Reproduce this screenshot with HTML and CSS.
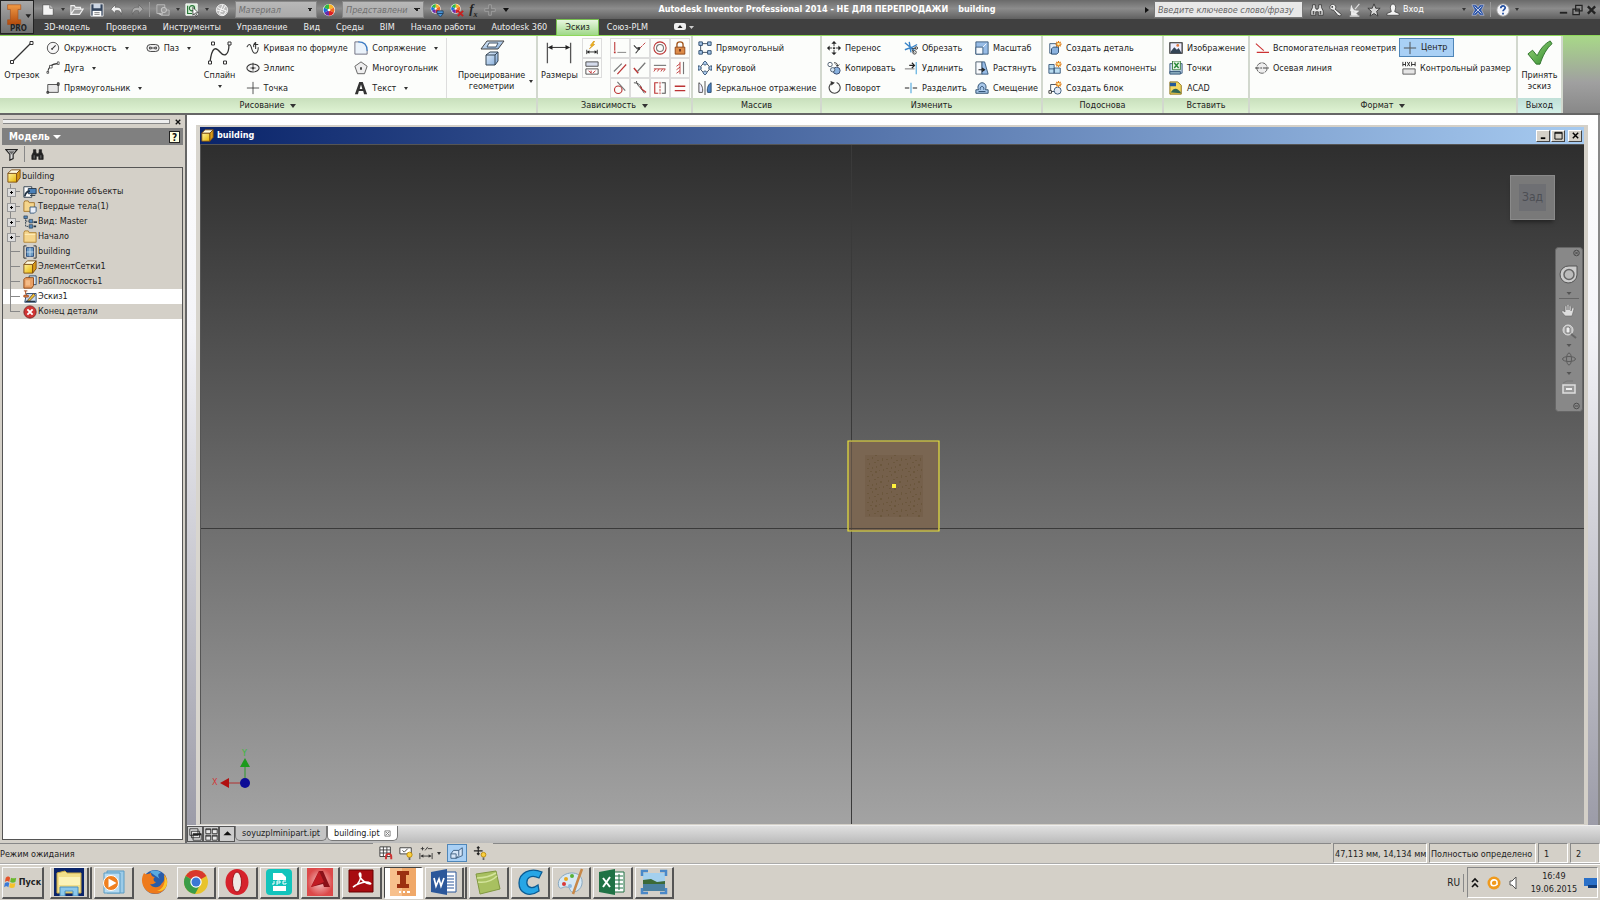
FILE: index.html
```html
<!DOCTYPE html>
<html lang="ru">
<head>
<meta charset="utf-8">
<title>Autodesk Inventor Professional 2014</title>
<link rel="stylesheet" href="styles.css">
</head>
<body>
<svg class="defs" aria-hidden="true">
<defs>
<linearGradient id="gy" x1="0" y1="0" x2="1" y2="1"><stop offset="0" stop-color="#fff3a0"/><stop offset="1" stop-color="#e8b400"/></linearGradient>
<linearGradient id="gb" x1="0" y1="0" x2="1" y2="1"><stop offset="0" stop-color="#e4f0fb"/><stop offset="1" stop-color="#7fa8d8"/></linearGradient>
<linearGradient id="go" x1="0" y1="0" x2="0" y2="1"><stop offset="0" stop-color="#f09a45"/><stop offset="1" stop-color="#b34a0c"/></linearGradient>
<linearGradient id="gg" x1="0" y1="0" x2="1" y2="1"><stop offset="0" stop-color="#9bd67c"/><stop offset="1" stop-color="#2f8a2c"/></linearGradient>
<radialGradient id="gm"><stop offset="0" stop-color="#f4c8c8"/><stop offset="1" stop-color="#dc4a4a"/></radialGradient>
<pattern id="noise" width="19" height="17" patternUnits="userSpaceOnUse"><path d="M1 2h2v1h-2zM6 0h1v2h-1zM11 3h2v1h-2zM16 1h1v3h-1zM3 6h1v2h-1zM8 5h2v1h-2zM14 7h2v2h-2zM1 11h2v1h-2zM6 10h1v2h-1zM10 9h1v2h-1zM17 12h1v2h-1zM4 14h2v1h-2zM9 14h2v2h-2zM13 13h1v1h-1z" fill="#5f4c2c" opacity=".45"/></pattern>
<g id="sun"><path d="M12 0v7M8.500 3.500h7M9.500 1l5 5M14.500 1l-5 5" stroke="#e07a10" stroke-width="1.300"/><circle cx="12" cy="3.500" r="1.500" fill="#fff0a0"/></g>
<symbol id="new" viewBox="0 0 16 16"><path d="M2 2h8l4 4v8H2z" fill="#f4f4f4" stroke="#444" stroke-width=".8"/><path d="M10 2v4h4" fill="#ccc" stroke="#777"/></symbol>
<symbol id="open" viewBox="0 0 16 16"><path d="M1 13V3h4l1 2h6v2M1 13l4-6h10l-4 6z" fill="#9a9a9a" stroke="#eee" stroke-width="1.300"/></symbol>
<symbol id="save" viewBox="0 0 16 16"><path d="M1 1h14v14H1z" fill="#33445c" stroke="#eee"/><path d="M4 1h8v5H4z" fill="#cdd6e4"/><path d="M3 9h10v6H3z" fill="#fff"/><path d="M5 11h6M5 13h6" stroke="#777"/></symbol>
<symbol id="undo" viewBox="0 0 16 16"><path d="M6 2L1 7l5 5V9c4-1 6 0 7 4 2-6-2-9-7-8z" fill="#eee" stroke="#444" stroke-width=".6"/></symbol>
<symbol id="redo" viewBox="0 0 16 16"><path d="M10 2l5 5-5 5V9c-4-1-6 0-7 4-2-6 2-9 7-8z" fill="#aaa" stroke="#555" stroke-width=".6"/></symbol>
<symbol id="upd" viewBox="0 0 16 16"><path d="M1 2h9v4H7v6H1zM8 8h7v6H7z" fill="#8a8a8a" stroke="#bbb"/><circle cx="9" cy="8" r="3" fill="#999" stroke="#ccc"/><path d="M3 12l4 2" fill="none" stroke="#ccc" stroke-width="1.500"/></symbol>
<symbol id="pick" viewBox="0 0 16 16"><path d="M1 1h13v13H1z" fill="#d8eed8" stroke="#fff"/><path d="M3 3v9h5" fill="none" stroke="#267336" stroke-width="1.300"/><circle cx="8" cy="6" r="3" fill="none" stroke="#267336" stroke-width="1.200"/><path d="M9 5l6 6-3 .3 2 3.500-1.500.7-2-3.500-1.500 2z" fill="#fff" stroke="#222" stroke-width=".8"/></symbol>
<symbol id="globe" viewBox="0 0 16 16"><circle cx="8" cy="8" r="6.500" fill="#bbb" stroke="#eee"/><path d="M3 5l4 2 2-5M7 7l-2 5 5 2 3-5-6-2M9 10l-7-2M12 3l-3 5" fill="none" stroke="#fff"/></symbol>
<symbol id="color" viewBox="0 0 16 16"><circle cx="8" cy="8" r="7" fill="#fff"/><path d="M8 8V1.500A6.500 6.500 0 0113.600 5z" fill="#f8b42a"/><path d="M8 8l5.600-3a6.500 6.500 0 010 6z" fill="#f06a20"/><path d="M8 8l5.600 3A6.500 6.500 0 018 14.500z" fill="#d22"/><path d="M8 8v6.500A6.500 6.500 0 012.400 11z" fill="#6a2ca8"/><path d="M8 8l-5.600 3a6.500 6.500 0 010-6z" fill="#1a70d8"/><path d="M8 8L2.400 5A6.500 6.500 0 018 1.500z" fill="#36b840"/><circle cx="8" cy="8" r="1.500" fill="#ffe"/></symbol>
<symbol id="color2" viewBox="0 0 16 16"><use href="#color" width="13" height="13"/><path d="M8 9h7v3H8zM8 12h7l-3 4z" fill="#4a94d8" stroke="#246"/></symbol>
<symbol id="color3" viewBox="0 0 16 16"><use href="#color" width="13" height="13"/><path d="M9 9l6 6M15 9l-6 6" stroke="#c52020" stroke-width="2.200"/></symbol>
<symbol id="plusg" viewBox="0 0 16 16"><path d="M6.500 2h3v4.500H14v3H9.500V14h-3V9.500H2v-3h4.500z" fill="#777" stroke="#aaa" stroke-width=".8"/></symbol>
<symbol id="bino" viewBox="0 0 16 16"><path d="M3 2h3v3l1 2h2l1-2V2h3v3l2 4v5H9.500v-4h-3v4H1V9l2-4z" fill="currentColor" stroke="#222" stroke-width=".8"/><path d="M3 9h2v4H3zM11 9h2v4h-2z" fill="#555"/></symbol>
<symbol id="key" viewBox="0 0 16 16"><path d="M1 5c0-3 4-5 6-2 1 1 1 3 0 4l7 6-1 2-3-1-5-6C3 8.500 1 7 1 5z" fill="#ececec" stroke="#333" stroke-width=".9"/><circle cx="3.700" cy="4.500" r="1" fill="#333"/></symbol>
<symbol id="dish" viewBox="0 0 16 16"><path d="M4 3c0 4 4 7 8 6l-3 3-6-3zM4 10v4h7l-4-4" fill="#eee" stroke="#eee"/><path d="M2 15h11M8 7l5-6" stroke="#ddd" stroke-width="1.300"/></symbol>
<symbol id="star" viewBox="0 0 16 16"><path d="M8 1l2 5h5l-4 3.500 1.500 5.500L8 12l-4.500 3L5 9.500 1 6h5z" fill="#d8d8d8" stroke="#333"/></symbol>
<symbol id="user" viewBox="0 0 16 16"><path d="M5 5c0-5 6-5 6 0 0 3-1 3-1 5l5 2v2H1v-2l5-2c0-2-1-2-1-5z" fill="#f4f4f4" stroke="#333" stroke-width=".8"/></symbol>
<symbol id="xch" viewBox="0 0 16 16"><path d="M1 2h5l2 3 2-3h5l-3 6 3 6h-5l-2-3-2 3H1l3-6z" fill="#2c56a8" stroke="#ccd" stroke-width=".7"/><path d="M4 4l8 8M12 4l-8 8" stroke="#dde" stroke-width="1"/></symbol>
<symbol id="help" viewBox="0 0 16 16"><circle cx="8" cy="8" r="7" fill="#f6f6fa" stroke="#aaa"/><path d="M5.500 6c0-3.500 5-3.500 5-.5 0 2-2.500 2-2.500 4M8 11v2" fill="none" stroke="#234fa0" stroke-width="2"/></symbol>
<symbol id="line" viewBox="0 0 26 26"><path d="M3 22L22 3" stroke="#333" stroke-width="1.200"/><path d="M1.500 20.500h3v3h-3zM21 1.500h3v3h-3z" fill="#fff" stroke="#333"/></symbol>
<symbol id="spline" viewBox="0 0 26 26"><path d="M3 22C5 6 9 7 13 12s9 4 9-8" fill="none" stroke="#333" stroke-width="1.300"/><path d="M1.500 21h3v3h-3zM21 2h3v3h-3zM4.500 2h3v3h-3zM16.500 21h3v3h-3z" fill="#fff" stroke="#333"/></symbol>
<symbol id="proj" viewBox="0 0 26 26"><path d="M8 1h17l-6 8H2z" fill="url(#gb)" stroke="#444"/><path d="M10 3h9l-2 4H8z" fill="#fff" stroke="#456"/><path d="M7 15l4-3h8v9l-3 4H7z" fill="url(#gb)" stroke="#345"/><path d="M7 15h9v10M16 15l3-3" fill="none" stroke="#345"/></symbol>
<symbol id="dims" viewBox="0 0 28 26"><path d="M1.500 2v22M26.500 2v22" stroke="#555" stroke-width="1.400"/><path d="M3 7h22" stroke="#222"/><path d="M2 7l5-2.500v5zM26 7l-5-2.500v5z" fill="#222"/></symbol>
<symbol id="check" viewBox="0 0 28 28"><path d="M1 15l5-4 5 6C14 10 19 4 25 1l2 3c-6 5-10 13-13 22h-4z" fill="url(#gg)" stroke="#2d702a"/></symbol>
<symbol id="circ" viewBox="0 0 16 16"><circle cx="8" cy="8" r="6.500" fill="#f6f6f6" stroke="#444"/><path d="M7 9l4-4" stroke="#333" stroke-width="1.200"/><path d="M6 8h2v2H6z" fill="#444"/></symbol>
<symbol id="arc" viewBox="0 0 16 16"><path d="M2 14C2 8 6 3 13 3" fill="none" stroke="#333" stroke-width="1.300"/><path d="M1 12h2v2H1zM4 5h3v3H4zM13 1h2v3h-2z" fill="#fff" stroke="#333" stroke-width=".8"/></symbol>
<symbol id="rect" viewBox="0 0 16 16"><path d="M2 4h12v9H2z" fill="#e8e8e8" stroke="#444"/><path d="M1 12h2v2H1zM13 2h2v3h-2z" fill="#777" stroke="#333"/></symbol>
<symbol id="slot" viewBox="0 0 16 16"><rect x="1" y="4" width="14" height="8" rx="4" fill="#eee" stroke="#333"/><path d="M4 7h2v2H4zM10 7h2v2h-2z" fill="#fff" stroke="#333"/><path d="M6 8h4" stroke="#333"/></symbol>
<symbol id="curve" viewBox="0 0 16 16"><path d="M1 7c2-4 4-4 5 0s2 7 4 7 4-2 4-7M9 7c-1-3 1-5 2-5M11 1v8M9 4h5" fill="none" stroke="#333" stroke-width="1.200"/></symbol>
<symbol id="ell" viewBox="0 0 16 16"><ellipse cx="8" cy="8" rx="7" ry="4.500" fill="#f4f4f4" stroke="#333" stroke-width="1.200"/><path d="M8 2v9M5 8h6" stroke="#333"/><path d="M7 7h2v2H7z" fill="#333"/></symbol>
<symbol id="point" viewBox="0 0 16 16"><path d="M8 1v14M1 8h14" stroke="#444"/><path d="M7 7h2v2H7z" fill="#777"/></symbol>
<symbol id="fillet" viewBox="0 0 16 16"><path d="M1 1h6c5 0 8 3 8 8v6H1z" fill="#eaf2fa"/><path d="M6 1H1v14h14v-5" fill="none" stroke="#667"/><path d="M5 1c6 0 10 3 10 10" fill="none" stroke="#3d7cc4" stroke-width="1.500"/></symbol>
<symbol id="poly" viewBox="0 0 16 16"><path d="M8 1l7 5-3 8.500H4L1 6z" fill="#eee" stroke="#555"/><path d="M7 7h2v3H7z" fill="#333"/></symbol>
<symbol id="txt" viewBox="0 0 16 16"><path d="M1 15L6 1h4l5 14h-3.500l-1-3.500h-5L4.500 15zM6.500 9h3L8 4z" fill="#333"/></symbol>
<symbol id="autod" viewBox="0 0 16 16"><path d="M10 0L6 5h2L5 9l6-5H9l2-4z" fill="#f8c020" stroke="#c88000" stroke-width=".6"/><path d="M2 10v5M14 10v5M3 12.500h10" stroke="#222"/><path d="M2 12.500l3-2v4zM14 12.500l-3-2v4z" fill="#222"/></symbol>
<symbol id="showc" viewBox="0 0 16 16"><path d="M1 1h14v5H1z" fill="#d5dcec" stroke="#444"/><path d="M1 9h14v6H1z" fill="#fff" stroke="#444"/><path d="M4 11l3 3M7 11v3M9 14l3-3" stroke="#b22"/></symbol>
<symbol id="c1" viewBox="0 0 16 16"><path d="M2 1v10" stroke="#b33" stroke-width="1.200"/><path d="M5 13h10" stroke="#777"/><path d="M1 12h2v2H1z" fill="#b33"/></symbol>
<symbol id="c2" viewBox="0 0 16 16"><path d="M1 5l4 4M8 8l-5 6" stroke="#333" stroke-width="1.200"/><path d="M8 8l6-6" stroke="#b33" stroke-dasharray="4 1"/><path d="M5 7h3v3H5z" fill="#333"/></symbol>
<symbol id="c3" viewBox="0 0 16 16"><circle cx="8" cy="8" r="7" fill="none" stroke="#b33" stroke-width="1.200"/><circle cx="8" cy="8" r="4" fill="none" stroke="#777" stroke-width="1.200"/></symbol>
<symbol id="c4" viewBox="0 0 16 16"><path d="M4.500 7V4c0-4 7-4 7 0v3" fill="none" stroke="#a55a22" stroke-width="1.600"/><path d="M2.500 7h11v8h-11z" fill="#dd8b48" stroke="#8a4010"/><path d="M8 9v3" stroke="#632" stroke-width="2"/></symbol>
<symbol id="c5" viewBox="0 0 16 16"><path d="M1 12L10 3" stroke="#777" stroke-width="1.300"/><path d="M5 15L15 4" stroke="#b33" stroke-width="1.300"/></symbol>
<symbol id="c6" viewBox="0 0 16 16"><path d="M1 8l5 6" stroke="#b33" stroke-width="1.600"/><path d="M5 12l9-10" stroke="#777" stroke-width="1.400"/></symbol>
<symbol id="c7" viewBox="0 0 16 16"><path d="M1 5h14" stroke="#777" stroke-width="1.300"/><path d="M1 9h13M3 9l-2 3M7 9l-2 3M11 9l-2 3M14 9l-2 3" stroke="#b33"/></symbol>
<symbol id="c8" viewBox="0 0 16 16"><path d="M12 1v14" stroke="#777" stroke-width="1.300"/><path d="M8 1v14M8 3L4 6M8 7l-4 3M8 11l-4 3" stroke="#b33"/></symbol>
<symbol id="c9" viewBox="0 0 16 16"><circle cx="6" cy="10" r="4.300" fill="none" stroke="#b33" stroke-width="1.300"/><path d="M5 1l9 10" stroke="#777" stroke-width="1.300"/></symbol>
<symbol id="c10" viewBox="0 0 16 16"><path d="M1 2c5 0 7 2 9 6M4 0c0 5 4 6 9 14" stroke="#444" fill="none"/><path d="M8 6c2 4 5 6 7 7" stroke="#b33" fill="none" stroke-width="1.300"/></symbol>
<symbol id="c11" viewBox="0 0 16 16"><path d="M6 2H2v12h4" fill="none" stroke="#b33" stroke-width="1.300"/><path d="M10 2h4v12h-4" fill="none" stroke="#555" stroke-width="1.200"/><path d="M8 1v14" stroke="#b33" stroke-dasharray="3 1"/></symbol>
<symbol id="c12" viewBox="0 0 16 16"><path d="M2 6h12M2 11h12" stroke="#b33" stroke-width="1.500"/></symbol>
<symbol id="prect" viewBox="0 0 16 16"><path d="M3 3h10M3 3v10M3 13h10" stroke="#345" fill="none"/><path d="M1 1h4v4H1zM11 1h4v4h-4zM1 11h4v4H1zM11 11h4v4h-4z" fill="#a9c8ea" stroke="#246"/></symbol>
<symbol id="pcirc" viewBox="0 0 16 16"><circle cx="8" cy="8" r="5" fill="none" stroke="#345"/><path d="M8 0l2.500 2.500L8 5 5.500 2.500zM8 11l2.500 2.500L8 16l-2.500-2.500zM1 5l3 3-3 3-1-3zM15 5l-3 3 3 3 1-3z" fill="#a9c8ea" stroke="#246" stroke-width=".9"/></symbol>
<symbol id="mirr" viewBox="0 0 16 16"><path d="M8 0v16" stroke="#444"/><path d="M1 2c4 2 5 8 4 11H1z" fill="#eef" stroke="#444"/><path d="M15 2c-4 2-5 8-4 11h4z" fill="#4f86c8" stroke="#246"/></symbol>
<symbol id="move" viewBox="0 0 16 16"><path d="M8 1v5M8 10v5M1 8h5M10 8h5" stroke="#222"/><path d="M8 0l3 3H5zM8 16l3-3H5zM0 8l3-3v6zM16 8l-3-3v6zM7 7h2v2H7z" fill="#222"/></symbol>
<symbol id="copy" viewBox="0 0 16 16"><circle cx="3.500" cy="4" r="2.500" fill="#fff" stroke="#456"/><circle cx="11" cy="11" r="4" fill="#8ab2df" stroke="#346"/><circle cx="6.500" cy="10" r="2.500" fill="#d4e4f4" stroke="#456"/><path d="M8 2c3 0 4 1 4 4M10 4l2 2 2-2" fill="none" stroke="#222"/></symbol>
<symbol id="rot" viewBox="0 0 16 16"><path d="M6 2a6.300 6.300 0 105-.2" fill="none" stroke="#444" stroke-width="1.300"/><path d="M4 0l5 2-4 3z" fill="#333"/></symbol>
<symbol id="trim" viewBox="0 0 16 16"><path d="M1 2l11 9M1 10l8-3M6 1l2 12M15 4L6 9" stroke="#3984c8" stroke-width="1.600"/><path d="M9 9l5-1M9 10l3 4" stroke="#333"/><circle cx="12" cy="13" r="2" fill="none" stroke="#333"/><circle cx="14" cy="8" r="1.500" fill="none" stroke="#333"/></symbol>
<symbol id="ext" viewBox="0 0 16 16"><path d="M14 1v14" stroke="#5fb0e0" stroke-width="1.400"/><path d="M1 9h11" stroke="#666"/><path d="M6 5h5M9 2l3 3-3 3" fill="none" stroke="#222" stroke-width="1.300"/></symbol>
<symbol id="split" viewBox="0 0 16 16"><path d="M1 8h5M10 8h5" stroke="#222" stroke-width="1.200"/><path d="M8 2v12" stroke="#5fb0e0" stroke-width="1.400"/></symbol>
<symbol id="scale" viewBox="0 0 16 16"><path d="M1 1h14v14H1z" fill="#98bce6" stroke="#357"/><path d="M1 7h8v8H1z" fill="#f4f8fd" stroke="#357"/><path d="M9 7l4-4" stroke="#fff"/></symbol>
<symbol id="stretch" viewBox="0 0 16 16"><path d="M1 1h7v14H1z" fill="#f8fafd" stroke="#456"/><path d="M8 1h3l4 14H8z" fill="#98bce6" stroke="#357"/><path d="M4 10h6M8 8l3 2-3 2" fill="none" stroke="#222" stroke-width="1.200"/></symbol>
<symbol id="offs" viewBox="0 0 16 16"><path d="M1 14h14v-4h-3c2-5-1-8-4-8S2 6 4 10H1z" fill="#a9c8ea" stroke="#246"/><path d="M4 12h8M6 10c-1-5 5-5 4 0" fill="none" stroke="#246"/></symbol>
<symbol id="mpart" viewBox="0 0 16 16"><path d="M2 3h8v11H2z" fill="#e4f0fb" stroke="#357"/><path d="M4 9l2-2h6v6l-2 2H4z" fill="#8ab2df" stroke="#246"/><use href="#sun"/></symbol>
<symbol id="mcomp" viewBox="0 0 16 16"><path d="M1 4h6v10H1zM7 8h7v6H7zM1 9h6" fill="#b9dcf0" stroke="#357"/><use href="#sun"/></symbol>
<symbol id="mblock" viewBox="0 0 16 16"><path d="M3 4h7M3 4v8h5" fill="none" stroke="#345"/><circle cx="11" cy="11" r="4" fill="#e0e8f4" stroke="#357"/><path d="M1 11h3v3H1z" fill="#fff" stroke="#333"/><use href="#sun"/></symbol>
<symbol id="img" viewBox="0 0 16 16"><path d="M1 2h14v12H1z" fill="#eef" stroke="#222" stroke-width="1.300"/><path d="M2 12l4-5 3 3 2-2 3 5v1H2z" fill="#345"/><circle cx="10" cy="5" r="1.600" fill="#e07a40"/></symbol>
<symbol id="xl" viewBox="0 0 16 16"><path d="M1 3h14v11H1z" fill="#c9dcf2" stroke="#357"/><path d="M4 0h9v10H4z" fill="#e7f4e7" stroke="#373"/><path d="M6 2l5 6M11 2L6 8" stroke="#2b8a3a" stroke-width="1.600"/><path d="M1 12h12v3H1z" fill="#8ab" stroke="#357"/></symbol>
<symbol id="acad" viewBox="0 0 16 16"><path d="M1 1h9l4 4v10H1z" fill="#f4d860" stroke="#886a10"/><path d="M1 2h7v4H1z" fill="#245a9a"/><path d="M2 13c4-6 8-5 12 1z" fill="#365"/></symbol>
<symbol id="constr" viewBox="0 0 16 16"><path d="M1 3l9 8M2 13h14" stroke="#c33" stroke-width="1.200"/></symbol>
<symbol id="cline" viewBox="0 0 16 16"><circle cx="8" cy="8" r="6" fill="#eee" stroke="#555" stroke-dasharray="6 1"/><path d="M0 8h16" stroke="#333" stroke-dasharray="5 1 2 1"/></symbol>
<symbol id="dd" viewBox="0 0 16 16"><path d="M1 9h14v6H1z" fill="#e5e5e5" stroke="#555"/><path d="M1 1v5M4 1v5M1 4h3M6 1l3 5M9 1L6 6M11 1v5M15 1v5M11 4h4" stroke="#222" fill="none"/></symbol>
<symbol id="cube" viewBox="0 0 16 16"><path d="M1 5h10v10H1z" fill="url(#gy)" stroke="#7a4a10"/><path d="M1 5l4-4h10l-4 4z" fill="#fffbe0" stroke="#7a4a10"/><path d="M11 5v10l4-5V1z" fill="#d99a18" stroke="#7a4a10"/></symbol>
<symbol id="t1" viewBox="0 0 16 16"><path d="M1 2h9v12H1z" fill="#fff" stroke="#234"/><path d="M6 4h9v6H6z" fill="#4a80b8" stroke="#234"/><path d="M2 13c1-5 3-6 6-6" fill="none" stroke="#234" stroke-width="2"/><path d="M8 12h6" stroke="#234"/></symbol>
<symbol id="t2" viewBox="0 0 16 16"><path d="M1 3l1-2h4l1 2h6v10H1z" fill="#f5d58c" stroke="#a07028"/><path d="M8 8h7v5l-2 2H8z" fill="#e9eef8" stroke="#357"/></symbol>
<symbol id="t3" viewBox="0 0 16 16"><path d="M3 2v11h5M3 7h5" fill="none" stroke="#234" stroke-dasharray="2 1"/><path d="M1 1h4v3H1zM7 5h4v4H7zM7 11h4v4H7z" fill="#58b" stroke="#234" stroke-width=".7"/><path d="M12 8h4M12 13h3" stroke="#234" stroke-width="2"/></symbol>
<symbol id="t4" viewBox="0 0 16 16"><path d="M1 3l1-2h4l1 2h8v11H1z" fill="#f5d58c" stroke="#b08030"/><path d="M2 5h12" stroke="#fff0c0"/></symbol>
<symbol id="t5" viewBox="0 0 16 16"><path d="M4 1H1v14h3M12 1h3v14h-3" fill="none" stroke="#222"/><path d="M4 3h8v10H4z" fill="#6c9cc4" stroke="#247"/><path d="M8 3v10M4 8h8" stroke="#cde"/></symbol>
<symbol id="t7" viewBox="0 0 16 16"><path d="M7 1h8v10H7z" fill="#d6e4f4" stroke="#246"/><path d="M1 5l2-2h9v9l-2 3H1z" fill="#e8a066" stroke="#8a4010"/><path d="M3 6h5v6H3z" fill="#f4bc88"/></symbol>
<symbol id="t8" viewBox="0 0 16 16"><path d="M4 4h11v10H2z" fill="#c9dcf2" stroke="#246"/><path d="M1 1h4M3 1v4M1 6h5v2H1z" stroke="#a44010" fill="#f0a060"/><path d="M5 12l7-8 2 2-7 7z" fill="#f2c92c" stroke="#644"/><path d="M3 13h11" stroke="#234" stroke-width="1.500"/></symbol>
<symbol id="t9" viewBox="0 0 16 16"><circle cx="8" cy="8" r="7" fill="#d03434" stroke="#7a2424"/><path d="M5 5l6 6M11 5l-6 6" stroke="#fff" stroke-width="2.200"/></symbol>
<symbol id="filter" viewBox="0 0 16 16"><path d="M1 2h14L10 8v5l-4 2V8z" fill="#ddd" stroke="#222" stroke-width="1.400"/><path d="M4 4h8L8 8z" fill="#666"/></symbol>
<symbol id="grid" viewBox="0 0 16 16"><path d="M1 1h12v11H1zM1 4.500h12M1 8h12M5 1v11M9 1v11" fill="#fff" stroke="#333"/><path d="M8 15v-3c0-4 6-4 6 0v3" fill="none" stroke="#c33" stroke-width="2.200"/></symbol>
<symbol id="cshow" viewBox="0 0 16 16"><path d="M1 2h13v7H1z" fill="#fff" stroke="#333"/><path d="M4 5l2 2 4-4" fill="none" stroke="#333"/><circle cx="12" cy="10" r="3" fill="#f9cf40" stroke="#b80"/><path d="M12 13v3" stroke="#666" stroke-width="2"/></symbol>
<symbol id="tol" viewBox="0 0 16 16"><path d="M2 3h4M4 1v4M7 5l3-4M10 3h5M1 8v7M15 8v7M2 11.500h12" stroke="#333"/><path d="M2 11.500l3-2v4zM14 11.500l-3-2v4z" fill="#333"/></symbol>
<symbol id="slice" viewBox="0 0 16 16"><path d="M1 9l3-4h6v6l-3 3H1zM10 5l4-3v9l-7 3" fill="#d6e6f8" stroke="#357"/><path d="M1 9h6v5" fill="none" stroke="#357"/></symbol>
<symbol id="dof" viewBox="0 0 16 16"><path d="M6 1v9M1 5.500h10M4.500 2.500L6 1l1.500 1.500M4.500 8.500L6 10l1.500-1.500" fill="none" stroke="#222" stroke-width="1.300"/><circle cx="12" cy="10" r="2.700" fill="#f9cf40" stroke="#b80"/><path d="M12 13v3" stroke="#666" stroke-width="2"/></symbol>
<symbol id="casc" viewBox="0 0 16 16"><path d="M1 1h10v8H1zM3 4h10v8H3zM5 7h10v8H5z" fill="#e8e8e8" stroke="#222"/><path d="M5 8h10" stroke="#222" stroke-width="2"/></symbol>
<symbol id="tile" viewBox="0 0 16 16"><path d="M1 1h6v6H1zM9 1h6v6H9zM1 9h6v6H1zM9 9h6v6H9z" fill="#e8e8e8" stroke="#222"/><path d="M1 2h6M9 2h6M1 10h6M9 10h6" stroke="#222"/></symbol>
</defs>
</svg>

<div class="app">
<header class="top">
  <button class="appbtn" aria-label="Меню приложения"><svg viewBox="0 0 34 34"><path d="M7 4h14v5h-3v11h3v5H7v-5h3V9H7z" fill="url(#go)" stroke="#a84a10" stroke-width=".6"/><path d="M26 14h6l-3 4z" fill="#222"/></svg><span>PRO</span></button>
  <div class="bars">
    <div class="title">
      <div class="qat">
        <button aria-label="Создать"><svg><use href="#new"/></svg></button><i class="dn"></i>
        <button aria-label="Открыть"><svg><use href="#open"/></svg></button>
        <button aria-label="Сохранить"><svg><use href="#save"/></svg></button>
        <button aria-label="Отменить"><svg><use href="#undo"/></svg></button>
        <button aria-label="Повторить"><svg><use href="#redo"/></svg></button><i class="bar"></i>
        <button aria-label="Обновить"><svg><use href="#upd"/></svg></button><i class="dn"></i>
        <button aria-label="Выбор"><svg><use href="#pick"/></svg></button><i class="dn"></i>
        <button aria-label="Материалы"><svg><use href="#globe"/></svg></button>
        <select class="combo" aria-label="Материал"><option>Материал</option></select>
        <button aria-label="Цвета"><svg><use href="#color"/></svg></button>
        <select class="combo" aria-label="Представление"><option>Представлени</option></select>
        <button aria-label="Настроить"><svg><use href="#color2"/></svg></button>
        <button aria-label="Очистить"><svg><use href="#color3"/></svg></button>
        <button class="fx" aria-label="Параметры">f<sub>x</sub></button>
        <button aria-label="Добавить"><svg><use href="#plusg"/></svg></button><i class="dn wide"></i>
      </div>
      <h1><span>Autodesk Inventor Professional 2014 - НЕ ДЛЯ ПЕРЕПРОДАЖИ</span><span>building</span></h1>
      <div class="info">
        <i class="rt"></i>
        <input class="search" type="text" placeholder="Введите ключевое слово/фразу" aria-label="Поиск">
        <button class="w" aria-label="Найти"><svg><use href="#bino"/></svg></button>
        <button aria-label="Подписка"><svg><use href="#key"/></svg></button>
        <button aria-label="Связь"><svg><use href="#dish"/></svg></button>
        <button aria-label="Избранное"><svg><use href="#star"/></svg></button>
        <button class="login"><svg><use href="#user"/></svg>Вход</button>
        <i class="dn"></i>
        <button aria-label="Exchange"><svg><use href="#xch"/></svg></button><i class="bar"></i>
        <button aria-label="Справка"><svg><use href="#help"/></svg></button><i class="dn"></i>
        <div class="wc"><button aria-label="Свернуть"><svg viewBox="0 0 12 12"><path d="M2 9h8" stroke="#222" stroke-width="2"/></svg></button><button aria-label="Восстановить"><svg viewBox="0 0 12 12"><path d="M4 1h7v6H4zM1 5h7v6H1z" fill="#888" stroke="#222" stroke-width="1.300"/></svg></button><button aria-label="Закрыть"><svg viewBox="0 0 12 12"><path d="M2 2l8 8M10 2l-8 8" stroke="#222" stroke-width="2.500"/></svg></button></div>
      </div>
    </div>
    <nav class="menu">
      <a href="#">3D-модель</a><a href="#">Проверка</a><a href="#">Инструменты</a><a href="#">Управление</a><a href="#">Вид</a><a href="#">Среды</a><a href="#">BIM</a><a href="#">Начало работы</a><a href="#">Autodesk 360</a><a href="#" class="on">Эскиз</a><a href="#">Союз-PLM</a>
      <button class="mini" aria-label="Свернуть ленту"><svg viewBox="0 0 20 10"><rect y="1" width="12" height="7" rx="2" fill="#eee"/><path d="M6 3l2.500 3h-5z" fill="#222"/><path d="M15 4h5l-2.500 3z" fill="#ccc"/></svg></button>
    </nav>
  </div>
</header>

<section class="ribbon">
  <div class="panel draw">
    <div class="body">
      <button class="big"><svg><use href="#line"/></svg>Отрезок</button>
      <div class="col"><button><svg><use href="#circ"/></svg>Окружность<i class="dn"></i></button><button><svg><use href="#arc"/></svg>Дуга<i class="dn"></i></button><button><svg><use href="#rect"/></svg>Прямоугольник<i class="dn"></i></button></div>
      <div class="col"><button><svg><use href="#slot"/></svg>Паз<i class="dn"></i></button></div>
      <button class="big"><svg><use href="#spline"/></svg>Сплайн<i class="dn"></i></button>
      <div class="col"><button><svg><use href="#curve"/></svg>Кривая по формуле</button><button><svg><use href="#ell"/></svg>Эллипс</button><button><svg><use href="#point"/></svg>Точка</button></div>
      <div class="col"><button><svg><use href="#fillet"/></svg>Сопряжение<i class="dn"></i></button><button><svg><use href="#poly"/></svg>Многоугольник</button><button><svg><use href="#txt"/></svg>Текст<i class="dn"></i></button></div>
      <button class="big proj"><svg><use href="#proj"/></svg><span>Проецирование<br>геометрии</span><i class="dn"></i></button>
    </div>
    <footer>Рисование<i class="dn"></i></footer>
  </div>
  <div class="panel cons">
    <div class="body">
      <button class="big"><svg><use href="#dims"/></svg>Размеры</button>
      <div class="cells one"><button aria-label="Автоматические размеры"><svg><use href="#autod"/></svg></button><button aria-label="Показать"><svg><use href="#showc"/></svg></button></div>
      <div class="cells"><button aria-label="Совпадение"><svg><use href="#c1"/></svg></button><button aria-label="Коллинеарность"><svg><use href="#c2"/></svg></button><button aria-label="Концентричность"><svg><use href="#c3"/></svg></button><button aria-label="Фиксация"><svg><use href="#c4"/></svg></button><button aria-label="Параллельность"><svg><use href="#c5"/></svg></button><button aria-label="Перпендикулярность"><svg><use href="#c6"/></svg></button><button aria-label="Горизонтальность"><svg><use href="#c7"/></svg></button><button aria-label="Вертикальность"><svg><use href="#c8"/></svg></button><button aria-label="Касательность"><svg><use href="#c9"/></svg></button><button aria-label="Сглаживание"><svg><use href="#c10"/></svg></button><button aria-label="Симметричность"><svg><use href="#c11"/></svg></button><button aria-label="Равенство"><svg><use href="#c12"/></svg></button></div>
    </div>
    <footer>Зависимость<i class="dn"></i></footer>
  </div>
  <div class="panel patt">
    <div class="body"><div class="col"><button><svg><use href="#prect"/></svg>Прямоугольный</button><button><svg><use href="#pcirc"/></svg>Круговой</button><button><svg><use href="#mirr"/></svg>Зеркальное отражение</button></div></div>
    <footer>Массив</footer>
  </div>
  <div class="panel mod">
    <div class="body">
      <div class="col"><button><svg><use href="#move"/></svg>Перенос</button><button><svg><use href="#copy"/></svg>Копировать</button><button><svg><use href="#rot"/></svg>Поворот</button></div>
      <div class="col"><button><svg><use href="#trim"/></svg>Обрезать</button><button><svg><use href="#ext"/></svg>Удлинить</button><button><svg><use href="#split"/></svg>Разделить</button></div>
      <div class="col"><button><svg><use href="#scale"/></svg>Масштаб</button><button><svg><use href="#stretch"/></svg>Растянуть</button><button><svg><use href="#offs"/></svg>Смещение</button></div>
    </div>
    <footer>Изменить</footer>
  </div>
  <div class="panel lay">
    <div class="body"><div class="col"><button><svg><use href="#mpart"/></svg>Создать деталь</button><button><svg><use href="#mcomp"/></svg>Создать компоненты</button><button><svg><use href="#mblock"/></svg>Создать блок</button></div></div>
    <footer>Подоснова</footer>
  </div>
  <div class="panel ins">
    <div class="body"><div class="col"><button><svg><use href="#img"/></svg>Изображение</button><button><svg><use href="#xl"/></svg>Точки</button><button><svg><use href="#acad"/></svg>ACAD</button></div></div>
    <footer>Вставить</footer>
  </div>
  <div class="panel fmt">
    <div class="body">
      <div class="col"><button><svg><use href="#constr"/></svg>Вспомогательная геометрия</button><button><svg><use href="#cline"/></svg>Осевая линия</button></div>
      <div class="col"><button class="sel"><svg><use href="#point"/></svg>Центр</button><button><svg><use href="#dd"/></svg>Контрольный размер</button></div>
    </div>
    <footer>Формат<i class="dn"></i></footer>
  </div>
  <div class="panel exit">
    <div class="body"><button class="big"><svg><use href="#check"/></svg><span>Принять<br>эскиз</span></button></div>
    <footer>Выход</footer>
  </div>
</section>

<main class="work">
  <aside class="side">
    <div class="grip"><i></i><button aria-label="Закрыть панель"><svg viewBox="0 0 8 8"><path d="M1 1l6 6M7 1L1 7" stroke="#111" stroke-width="1.800"/></svg></button></div>
    <div class="shead"><span>Модель</span><i class="dn"></i><button aria-label="Справка">?</button></div>
    <div class="stools"><button aria-label="Фильтр"><svg><use href="#filter"/></svg></button><i></i><button aria-label="Найти"><svg><use href="#bino"/></svg></button></div>
    <div class="tree">
      <div class="root"><svg><use href="#cube"/></svg>building</div>
      <ul>
        <li class="ex"><svg><use href="#t1"/></svg>Сторонние объекты</li>
        <li class="ex"><svg><use href="#t2"/></svg>Твердые тела(1)</li>
        <li class="ex"><svg><use href="#t3"/></svg>Вид: Master</li>
        <li class="ex"><svg><use href="#t4"/></svg>Начало</li>
        <li><svg><use href="#t5"/></svg>building</li>
        <li><svg><use href="#cube"/></svg>ЭлементСетки1</li>
        <li><svg><use href="#t7"/></svg>РабПлоскость1</li>
        <li class="cur"><svg><use href="#t8"/></svg>Эскиз1</li>
        <li><svg><use href="#t9"/></svg>Конец детали</li>
      </ul>
    </div>
  </aside>
  <section class="mdi">
    <div class="desk">
      <article class="win">
        <header><svg><use href="#cube"/></svg><h2>building</h2>
          <button aria-label="Свернуть"><svg viewBox="0 0 10 10"><path d="M2 8h5" stroke="#000" stroke-width="2"/></svg></button><button aria-label="Развернуть"><svg viewBox="0 0 10 10"><path d="M1 1.500h8v7.500H1zM1 2.500h8" fill="none" stroke="#000"/></svg></button><button class="x" aria-label="Закрыть"><svg viewBox="0 0 10 10"><path d="M2 2l6 6M8 2L2 8" stroke="#000" stroke-width="1.600"/></svg></button></header>
        <div class="canvas">
          <i class="ax v"></i><i class="ax h"></i>
          <svg class="sketch" viewBox="0 0 93 92"><path d="M1 1h91v90H1z" fill="#7b6651" fill-opacity=".94" stroke="#e8e23c" stroke-width="1.200"/><path d="M4.500 2v88" stroke="#5f5246"/><path d="M2 88.500h89" stroke="#4a413a"/><path d="M18 15h58v62H18z" fill="#75604b"/><path d="M18 15h58v62H18z" fill="url(#noise)"/><path d="M45 44h4v4h-4z" fill="#fff23c"/></svg>
          <div class="vcube"><span>Зад</span></div>
          <svg class="nav" viewBox="0 0 28 165"><rect x=".5" y=".5" width="27" height="164" rx="3" fill="#888" stroke="#666"/><g fill="none" stroke="#4c4c4c"><circle cx="21.500" cy="6" r="2.800"/><path d="M20 4.500l3 3M23 4.500l-3 3"/><circle cx="21.500" cy="159" r="2.800"/><path d="M20 159h3"/><path d="M4 51.500h20" stroke="#666"/></g><path d="M14 19h8v9a8.500 8.500 0 11-8-9z" fill="#ccc" stroke="#555"/><circle cx="14" cy="27.500" r="5" fill="#bbb" stroke="#666" stroke-width="1.500"/><path d="M11.500 45h5l-2.500 3zM11.500 97h5l-2.500 3zM11.500 125h5l-2.500 3z" fill="#555"/><path d="M10 69c-2-3-4-4-3-5s3 1 3 1v-6c1-1 2 0 2 1v3-5c1-1 2 0 2 1v4-4c1-1 2 0 2 1v4l1-3c1-1 2 0 2 1l-2 7z" fill="#ddd" stroke="#666" stroke-width=".6"/><circle cx="13" cy="83" r="5" fill="#bbb" stroke="#ddd"/><path d="M11 80h3l1 1v5h-4z" fill="#eee" stroke="#555" stroke-width=".7"/><path d="M16 87l5 4" stroke="#666" stroke-width="2"/><g fill="none" stroke="#5c5c5c"><ellipse cx="14" cy="112" rx="6.500" ry="2.500"/><ellipse cx="14" cy="112" rx="2.500" ry="6"/></g><path d="M8 138h12v8H8z" fill="#999" stroke="#ddd" stroke-width="1.500"/><path d="M11 141h6v2h-6z" fill="#eee"/><path d="M8 136l4-2h6" stroke="#777" fill="none"/></svg>
          <svg class="triad" viewBox="0 0 42 42"><path d="M33 31V9" stroke="#2a9a2a"/><path d="M33 6l5 9h-10z" fill="#1c9a1c"/><path d="M33 31H10" stroke="#b03030"/><path d="M8 31l9-5v10z" fill="#b01010"/><circle cx="33" cy="31" r="5" fill="#0c0c96"/></svg>
          <span class="lx">X</span><span class="ly">Y</span>
        </div>
      </article>
    </div>
    <div class="tabs">
      <button class="sq" aria-label="Каскад"><svg><use href="#casc"/></svg></button><button class="sq" aria-label="Мозаика"><svg><use href="#tile"/></svg></button><button class="sq" aria-label="Вверх"><svg viewBox="0 0 16 16"><path d="M8 4l5 5H3z" fill="#111"/></svg></button>
      <button class="tab">soyuzplminipart.ipt</button><button class="tab on">building.ipt <svg viewBox="0 0 8 8"><path d="M1 1h6v6H1zM2 2l4 4M6 2L2 6" fill="none" stroke="#777"/></svg></button>
    </div>
  </section>
</main>

<div class="status">
  <span class="msg">Режим ожидания</span>
  <div class="stb"><button aria-label="Привязка к сетке"><svg><use href="#grid"/></svg></button><button aria-label="Зависимости"><svg><use href="#cshow"/></svg></button><button aria-label="Допуски"><svg><use href="#tol"/></svg></button><i class="dn"></i><button class="sel" aria-label="Разрез"><svg><use href="#slice"/></svg></button><button aria-label="Степени свободы"><svg><use href="#dof"/></svg></button></div>
  <span class="fill"></span>
  <span class="c a">47,113 мм, 14,134 мм</span><span class="c b">Полностью определено</span><span class="c n">1</span><span class="c n">2</span>
</div>

<footer class="task">
  <button class="start"><svg viewBox="0 0 16 16"><path d="M2 3c2-2 4-1 5 0L6 8C5 7 3 6 1 8z" fill="#e5532a"/><path d="M8 3c2 1 4 1 6 0l-1 5c-2 1-4 1-6 0z" fill="#6ab82c"/><path d="M1 9c2-1 4-1 5 0l-1 5c-1-1-3-2-5 0z" fill="#3a7ad8"/><path d="M7 9c2 1 4 1 6 0l-1 5c-2 1-4 1-6 0z" fill="#f6c22a"/></svg>Пуск</button>
  <div class="apps">
    <button class="multi" aria-label="Проводник"><svg viewBox="0 0 30 28"><path d="M0 0h30v28H0z" fill="#0a246a"/><path d="M3 5l8-2 2 2h14v20H3z" fill="#f2df8a" stroke="#c8a848"/><path d="M5 9h21v8H5z" fill="#fcf3b8"/><path d="M6 28v-9h18v9h-5v-5h-8v5z" fill="#8cc8ea" stroke="#4a90c0"/></svg></button>
    <button aria-label="Проигрыватель"><svg viewBox="0 0 30 28"><path d="M9 3h17v22H9z" fill="#9ccbe8" stroke="#5a9cc4"/><path d="M6 5h16v20H6z" fill="#b8dcf2" stroke="#5a9cc4"/><circle cx="13" cy="15" r="7.500" fill="#f08020" stroke="#fff"/><path d="M10.500 10.500l8 4.500-8 4.500z" fill="#fff"/></svg></button>
    <button class="flat" aria-label="Firefox"><svg viewBox="0 0 30 28"><circle cx="15" cy="14" r="12" fill="#2a5ca8"/><path d="M10 4c3-2 8-2 11 1-4 0-3 4-1 6z" fill="#5aaae0"/><path d="M4 5c-3 5-3 12 2 17 7 7 19 4 21-6 1-4-1-8-3-10 1 4 0 8-2 9-2 5-9 6-12 1 3 1 5-1 6-2-3 0-3-4-1-5-3 0-4-2-4-4-3 1-5 2-7 0z" fill="#ee7a1c"/><path d="M24 7c2 6 0 14-7 16 10 1 13-9 7-16z" fill="#fbc52c"/></svg></button>
    <button aria-label="Chrome"><svg viewBox="0 0 30 28"><circle cx="15" cy="14" r="12" fill="#e8c32c"/><path d="M15 14L4.600 8A12 12 0 0125.400 8z" fill="#d8382c"/><path d="M4.600 8A12 12 0 0014 26l5-9-4-3z" fill="#3a9c48"/><circle cx="15" cy="14" r="5.700" fill="#fff"/><circle cx="15" cy="14" r="4.500" fill="#3c78d4"/></svg></button>
    <button aria-label="Opera"><svg viewBox="0 0 30 28"><ellipse cx="15" cy="14" rx="11.500" ry="13" fill="#d6222c"/><ellipse cx="15" cy="14" rx="4.500" ry="10" fill="#eee8e4" stroke="#a0141c"/></svg></button>
    <button aria-label="JPG"><svg viewBox="0 0 30 28"><rect x="2" y="1" width="26" height="26" rx="4" fill="#12c4bc"/><path d="M9 5h9l4 4v14H9z" fill="#fff"/><path d="M7 12h17v6H7z" fill="#12c4bc"/><path d="M10 13v3h-2M13 17v-4h3v2h-3M22 13h-3v3h3v-1" stroke="#fff" fill="none"/></svg></button>
    <button aria-label="AutoCAD"><svg viewBox="0 0 30 28"><path d="M2 0h26v28H2z" fill="url(#gm)"/><path d="M14 3h4l7 16h-6l-1-3-12 3z" fill="#8a1018"/><path d="M14 3L6 19l8-3 5-2z" fill="#c01c24"/></svg></button>
    <button aria-label="Acrobat"><svg viewBox="0 0 30 28"><path d="M3 2h24v22H3z" fill="#a80c10" stroke="#600"/><path d="M7 19c8-3 9-14 7-14s0 9 10 11c2 0 0-2-4-2s-11 3-13 5z" fill="none" stroke="#fff" stroke-width="1.500"/></svg></button>
    <button class="act" aria-label="Inventor"><svg viewBox="0 0 30 28"><path d="M2 0h26v28H2z" fill="#f0a868"/><path d="M2 0h12v28H2z" fill="#f7c08c"/><path d="M9 3h12v4h-3v9h3v4H9v-4h3V7H9z" fill="#9c3010"/><path d="M11 24h2M15 24h2M19 24h3" stroke="#fff" stroke-width="2"/></svg></button>
    <button class="multi" aria-label="Word"><svg viewBox="0 0 30 28"><path d="M14 4h13v20H14z" fill="#fff" stroke="#2b579a"/><path d="M18 8h7M18 11h7M18 14h7M18 17h7M18 20h7" stroke="#2b579a"/><path d="M2 4l16-3v26L2 24z" fill="#2b579a"/><path d="M5 10l2 8 3-7 2 7 3-8" fill="none" stroke="#fff" stroke-width="1.700"/></svg></button>
    <button aria-label="Фото"><svg viewBox="0 0 30 28"><path d="M3 6l20-3 4 18-20 5z" fill="#a8c060" stroke="#809840"/><path d="M4 10c8 0 14-2 19-5M5 14c8 1 14-1 19-6" stroke="#d4e49c" stroke-width="1.500" fill="none"/></svg></button>
    <button aria-label="C"><svg viewBox="0 0 30 28"><path d="M27 4l-3 6c-8-4-13 0-12 6 1 4 6 5 11 1l1 6C14 30 4 25 4 15S15-1 27 4z" fill="#27a6e6" stroke="#0b5c94" stroke-width="1.300"/></svg></button>
    <button aria-label="Paint"><svg viewBox="0 0 30 28"><path d="M3 19C-1 9 14 1 23 7c6 5 3 16-5 17-5 1-3-5-7-5-4-1-6 3-8 0z" fill="#d6e8f4" stroke="#88a8c0"/><circle cx="8" cy="16" r="2" fill="#d83838"/><circle cx="10" cy="11" r="2" fill="#e8a820"/><circle cx="16" cy="8" r="2" fill="#58b038"/><circle cx="14" cy="18" r="2" fill="#8cb8e0"/><path d="M26 1l-3 8-6 17" fill="none" stroke="#c88848" stroke-width="2.500"/></svg></button>
    <button aria-label="Excel"><svg viewBox="0 0 30 28"><path d="M14 4h13v20H14z" fill="#fff" stroke="#207245"/><path d="M18 8h8M18 12h8M18 16h8M18 20h8M22 6v16" stroke="#207245"/><path d="M2 4l16-3v26L2 24z" fill="#207245"/><path d="M6 10l7 9M13 9l-7 10" stroke="#fff" stroke-width="2"/></svg></button>
    <button aria-label="Просмотр"><svg viewBox="0 0 30 28"><path d="M4 5h22v18H4z" fill="#a4d0ee"/><path d="M4 14h22v9H4z" fill="#4a80a0"/><path d="M4 12l8-1 6 3 8-1v3H4z" fill="#3c6a38"/><path d="M3 8V3h6M21 3h6v5M27 20v5h-6M9 25H3v-5" fill="none" stroke="#4a88c8" stroke-width="2.500"/></svg></button>
  </div>
  <span class="lang">RU</span>
  <div class="tray">
    <svg viewBox="0 0 10 14"><path d="M2 6l3-3 3 3M2 11l3-3 3 3" fill="none" stroke="#111" stroke-width="1.600"/></svg>
    <svg class="av" viewBox="0 0 14 14"><circle cx="7" cy="7" r="6.500" fill="#f09a1c"/><path d="M10 9V6c0-3-6-3-6 1s5 3 6 1" fill="none" stroke="#fff" stroke-width="1.600"/></svg>
    <svg viewBox="0 0 10 14"><path d="M2 5h2l4-4v12L4 9H2z" fill="#fff" stroke="#555"/></svg>
    <time>16:49<br>19.06.2015</time>
    <svg class="net" viewBox="0 0 13 12"><path d="M0 1h13v8H0z" fill="#2a70c8"/><path d="M4 8h9v3H4z" fill="#123c78"/></svg>
  </div>
</footer>
</div>
</body>
</html>
```
FILE: styles.css
```css
* { box-sizing: border-box; }
body {
  margin: 0;
  font-family: "DejaVu Sans Condensed", "DejaVu Sans", sans-serif;
  font-size: 9px;
  line-height: 11px;
  color: #222;
  background: #d4d0c8;
}
button { font: inherit; color: inherit; background: none; border: 0; padding: 0; margin: 0; white-space: nowrap; }
h1, h2 { font: inherit; font-weight: bold; margin: 0; }
a { color: inherit; text-decoration: none; }
svg { width: 14px; height: 14px; flex: none; display: block; }
.defs { position: absolute; width: 0; height: 0; }
.dn { border: 2px solid transparent; border-top: 3px solid #333; border-bottom: 0; flex: none; }
.app { display: flex; flex-direction: column; height: 100vh; overflow: hidden; }

/* title and menu */
.top { display: flex; height: 35px; background: #404040; }
.appbtn { width: 34px; height: 34px; position: relative; background: linear-gradient(#a8a8a8, #707070); border: 1px solid #222; }
.appbtn svg { width: 32px; height: 32px; }
.appbtn span { position: absolute; left: 9px; bottom: 0; font-size: 8px; line-height: 9px; font-weight: bold; color: #222; }
.bars { flex: 1; display: flex; flex-direction: column; min-width: 0; }
.title { height: 19px; display: flex; align-items: center; justify-content: space-between; background: linear-gradient(#6a6a6a, #8c8c8c 45%, #606060); color: #fff; }
.qat, .info { display: flex; align-items: center; height: 19px; }
.qat { width: 475px; padding-left: 7px; justify-content: space-between; }
.bar { width: 1px; height: 15px; background: #999; }
.combo { appearance: none; width: 82px; height: 17px; border: 1px solid #888; border-radius: 0; padding: 0 12px 0 3px; font: italic 9px "DejaVu Sans Condensed", "DejaVu Sans", sans-serif; color: #707070;
  background: linear-gradient(45deg, transparent 50%, #222 50%) right 6px center / 3px 3px no-repeat, linear-gradient(-45deg, transparent 50%, #222 50%) right 3px center / 3px 3px no-repeat, linear-gradient(#b8b8b8, #aaa); }
.fx { font: italic bold 13px "Liberation Serif", serif; color: #222; }
.fx sub { font-size: 8px; }
.dn.wide { border-width: 4px 3px 0; border-top-color: #111; }
.title h1 { display: flex; gap: 10px; white-space: pre; line-height: 13px; }
.info { width: 455px; gap: 5px; }
.rt { border: 3px solid transparent; border-left: 4px solid #111; border-right: 0; }
.search { width: 149px; height: 17px; border: 1px solid #777; background: #e8e8e8; padding: 0 3px; font: italic 9px "DejaVu Sans Condensed", "DejaVu Sans", sans-serif; }
.search::placeholder { color: #666; }
.w { color: #e8e8e8; margin-left: 2px; }
.login { display: flex; align-items: center; gap: 3px; margin-right: auto; }
.wc { display: flex; gap: 3px; margin-left: auto; padding-right: 3px; }
.wc svg { width: 11px; height: 12px; }
.menu { height: 16px; display: flex; color: #eee; padding-left: 2px; line-height: 16px; }
.menu a { padding: 0 8px; }
.menu .on { background: linear-gradient(#e8f6e0, #9fd888); color: #222; border: 1px solid #78c050; border-bottom: 0; line-height: 15px; margin-left: 1px; }
.mini { margin-left: 18px; }
.mini svg { width: 20px; height: 10px; }

/* ribbon */
.ribbon { display: grid; grid-template-columns: 538fr 155fr 129fr 221fr 121fr 86fr 268fr 45fr 37fr; height: 80px; border-top: 1px solid #8fd85a; border-bottom: 2px solid #666; background: linear-gradient(#a8d888, #a0a0a0 60%, #888); }
.panel { display: flex; flex-direction: column; min-width: 0; background: #fcfdfb; border-right: 2px solid #d2d8ce; }
.panel .body { flex: 1; display: flex; padding-top: 2px; min-height: 0; }
.panel footer { height: 15px; display: flex; align-items: center; justify-content: center; gap: 6px; background: linear-gradient(#c8dfbc, #e0f4d4); }
.panel footer .dn { border-width: 4px 3px 0; }
.panel.exit footer { background: linear-gradient(#c0e0d8, #d4f0e8); }
.col { display: flex; flex-direction: column; align-items: flex-start; }
.col button { height: 20px; display: flex; align-items: center; gap: 4px; }
.col .dn { margin-left: 4px; }
.big { display: flex; flex-direction: column; align-items: center; padding-top: 2px; gap: 4px; }
.big svg { width: 26px; height: 26px; }
.draw .body { display: grid; grid-template-columns: 42fr 100fr 54fr 46fr 109fr 95fr 90fr; padding-left: 1px; }
.draw .col { padding-left: 3px; }
.draw .proj { border-left: 1px solid #ddd; position: relative; }
.proj .dn { position: absolute; right: 3px; top: 42px; }
.cons .body { padding-left: 3px; gap: 4px; }
.cells { display: grid; grid-template-columns: repeat(4, 20px); grid-auto-rows: 20px; margin-left: 4px; }
.cells.one { grid-template-columns: 20px; margin-left: 0; }
.cells button { border: 1px solid #ddd; display: grid; place-items: center; }
.patt .body, .mod .body, .lay .body, .ins .body, .fmt .body { padding-left: 5px; }
.mod .body { display: grid; grid-template-columns: 77fr 71fr 66fr; }
.fmt .body { justify-content: space-between; padding-right: 5px; }
.fmt .sel { padding: 0 5px 0 3px; height: 19px; margin-bottom: 1px; }
.fmt .col + .col button:not(.sel) { padding-left: 3px; }
.sel { background: #a9d0f5; border: 1px solid #4f86b8; }
.exit .big { width: 100%; }

/* work area */
.work { flex: 1; display: flex; min-height: 0; }
.side { width: 185px; padding: 2px 2px 3px; display: flex; flex-direction: column; }
.grip { display: flex; align-items: center; height: 9px; gap: 5px; padding-left: 1px; }
.grip i { flex: 1; height: 5px; border: 1px solid #888; border-width: 1px 1px 1px 0; background: #eee; }
.grip svg { width: 6px; height: 6px; margin-right: 2px; }
.shead { height: 17px; margin-top: 2px; display: flex; align-items: center; gap: 3px; padding: 0 3px 0 7px; background: #808080; color: #fff; font-weight: bold; font-size: 10px; }
.shead .dn { border-width: 4px 4px 0; border-top-color: #fff; }
.shead button { margin-left: auto; width: 11px; height: 12px; line-height: 11px; background: #ffffe1; border: 1px solid #222; color: #111; font-weight: bold; }
.stools { height: 22px; display: flex; align-items: center; gap: 6px; padding: 0 0 4px 3px; }
.stools i { width: 1px; height: 16px; background: #888; }
.stools svg { width: 13px; height: 13px; }
.tree { flex: 1; background: #fff; border: 1px solid #555; line-height: 15px; }
.root { display: flex; gap: 1px; padding-left: 4px; align-items: center; height: 16px; background: #d4d0c8; }
.tree ul { list-style: none; margin: 0; padding: 0; }
.tree li { height: 15px; display: flex; align-items: center; gap: 1px; padding-left: 20px; background: linear-gradient(#888, #888) 7px 0 / 1px 100% no-repeat, linear-gradient(#888, #888) 7px 7px / 10px 1px no-repeat, #d4d0c8; }
.tree li:last-child { background-size: 1px 8px, 10px 1px, auto; }
.tree .cur { background-color: #fff; }
.tree .ex { position: relative; }
.tree .ex::before { content: ""; position: absolute; left: 4px; top: 4px; width: 7px; height: 7px; border: 1px solid #999; background: linear-gradient(#000, #000) center / 3px 1px no-repeat, linear-gradient(#000, #000) center / 1px 3px no-repeat, #ddd; }
.mdi { flex: 1; display: flex; flex-direction: column; min-width: 0; border-left: 2px solid #666; }
.desk { flex: 1; display: flex; padding: 10px 10px 0 9px; background: linear-gradient(#fff, #f4f4f8 30%, #9c9ca8); border-right: 2px solid #888; }
.win { flex: 1; display: flex; flex-direction: column; border: 2px solid #d4d0c8; border-left: 4px solid #d8d5ce; border-right-width: 4px; border-bottom-width: 1px; }
.win header { height: 17px; display: flex; align-items: center; padding: 0 2px 0 1px; gap: 1px; background: linear-gradient(90deg, #0a246a, #a6caf0); color: #fff; }
.win header > svg { width: 13px; height: 13px; }
.win h2 { margin: 0 auto 0 2px; }
.win header button { width: 14px; height: 12px; background: #d4d0c8; border: 1px solid; border-color: #fff #444 #444 #fff; display: grid; place-items: center; }
.win header button svg { width: 9px; height: 9px; }
.win header .x { margin-left: 2px; }
.canvas { flex: 1; position: relative; border: 1px solid #555; border-width: 1px 0 0 1px; background: linear-gradient(#2e2e2e, #5e5e5e 42%, #a3a3a3); overflow: hidden; }
.ax { position: absolute; background: #3a3a3a; }
.ax.v { left: 47%; top: 0; bottom: 0; width: 1px; }
.ax.h { top: 56.400%; left: 0; right: 0; height: 1px; }
.sketch { position: absolute; left: calc(47% - 4px); top: calc(56.400% - 88px); width: 93px; height: 92px; }
.vcube { position: absolute; right: 29px; top: 30px; width: 45px; height: 45px; padding: 8px; background: #797979; border: 1px solid #8a8a8a; box-shadow: 0 4px 4px -2px #222; }
.vcube span { display: block; background: #6e6f73; text-align: center; font-size: 12px; line-height: 27px; color: #4c4e54; }
.nav { position: absolute; right: 1px; top: 102px; width: 28px; height: 165px; }
.triad { position: absolute; left: 11px; bottom: 30px; width: 42px; height: 42px; }
.lx, .ly { position: absolute; font-size: 9px; color: #d03838; left: 11px; bottom: 36px; }
.ly { color: #38b838; left: 41px; bottom: 65px; }
.tabs { height: 18px; display: flex; align-items: flex-start; background: linear-gradient(#e0e0e0, #bbb); border-top: 1px solid #eee; }
.sq { width: 16px; height: 16px; border: 1px solid #555; background: #ccc; display: grid; place-items: center; }
.sq svg { width: 13px; height: 13px; }
.tab { height: 15px; padding: 0 6px; background: #c4c4c4; border: 1px solid #777; border-top: 0; border-radius: 0 0 5px 5px; display: flex; align-items: center; gap: 4px; }
.tab.on { background: #fff; }
.tab svg { width: 7px; height: 7px; }

/* status and task bar */
.status { height: 21px; display: flex; align-items: stretch; line-height: 20px; gap: 2px; border-bottom: 1px solid #aaa; }
.msg { width: 373px; border-top: 1px solid #888; }
.stb { display: flex; align-items: center; gap: 6px; padding: 0 4px; }
.stb .dn { margin-left: -2px; }
.stb .sel { padding: 1px 2px; }
.fill { flex: 1; border-top: 1px solid #888; }
.c { border: 1px solid; border-color: #888 #fff #fff #888; padding: 0 1px; white-space: nowrap; }
.c.a { width: 94px; }
.c.b { width: 107px; }
.c.n { width: 30px; padding-left: 5px; }
.task { height: 36px; display: flex; align-items: center; padding: 0 2px; border-top: 1px solid #fff; }
.start, .apps button { height: 32px; border: 1px solid; border-color: #f8f8f8 #555 #555 #f8f8f8; border-right-width: 2px; border-bottom-width: 2px; display: flex; align-items: center; justify-content: center; }
.start { width: 42px; font-weight: bold; gap: 1px; }
.apps { display: flex; width: 624px; gap: 2px; margin-left: 6px; }
.apps button { flex: 1; }
.apps svg { width: 30px; height: 28px; }
.apps .multi { border-right: 5px double #555; }
.apps .flat { border-color: transparent; }
.apps .act { background: #fff; border-color: #444 #fff #fff #444; }
.lang { margin-left: auto; font-size: 10px; padding-right: 3px; border-right: 1px solid #888; line-height: 18px; }
.tray { margin-left: 3px; width: 131px; height: 31px; border: 1px solid; border-color: #888 #fff #fff #888; display: flex; align-items: center; justify-content: space-between; padding-left: 2px; }
.tray svg { width: 10px; }
.tray .av { width: 14px; }
.tray time { line-height: 13px; text-align: center; margin-left: 6px; }
.tray .net { width: 13px; height: 12px; }
```
